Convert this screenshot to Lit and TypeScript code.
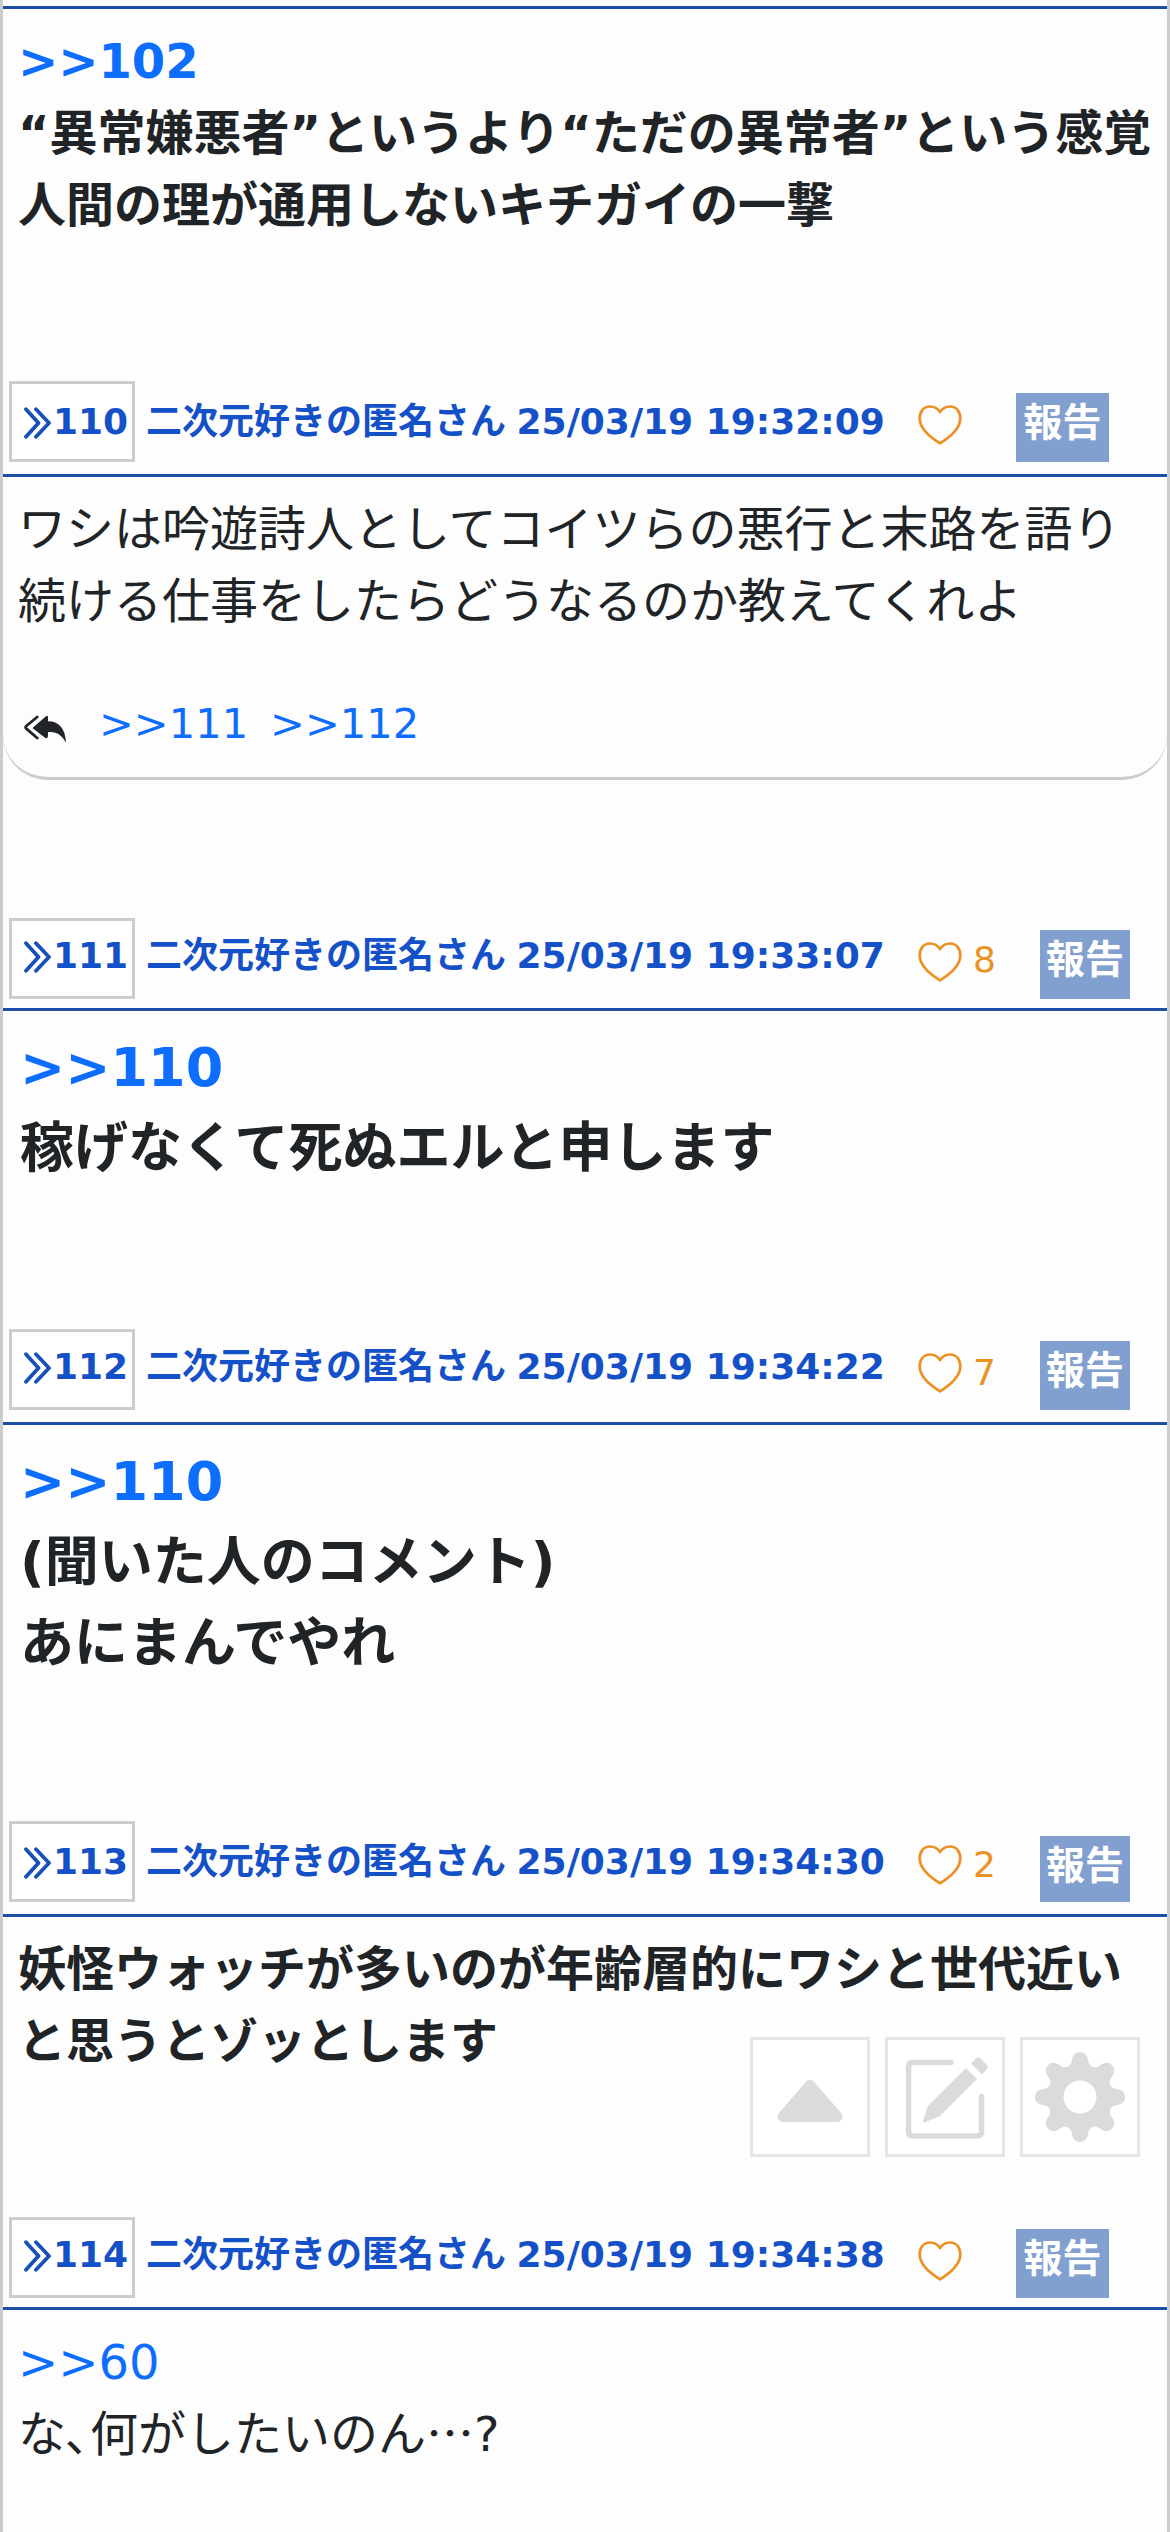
import { LitElement, html, css, svg, nothing } from "lit";
import { customElement, property } from "lit/decorators.js";

interface Post {
  no: number;
  time: string;
  likes?: number;
  size: "normal" | "strong" | "large";
  quote?: string;
  lines: unknown[];
  replies?: string[];
  head: "tight" | "loose" | "low";
  bodyHeight: number;
  countRaised?: boolean;
}

const POSTS: Post[] = [
  { no: 110, time: "25/03/19 19:32:09", size: "normal", lines: ["ワシは吟遊詩人としてコイツらの悪行と末路を語り", "続ける仕事をしたらどうなるのか教えてくれよ"], replies: [">>111", ">>112"], head: "loose", bodyHeight: 303 },
  { no: 111, time: "25/03/19 19:33:07", likes: 8, size: "large", quote: ">>110", lines: ["稼げなくて死ぬエルと申します"], head: "tight", bodyHeight: 210, countRaised: true },
  { no: 112, time: "25/03/19 19:34:22", likes: 7, size: "large", quote: ">>110", lines: ["(聞いた人のコメント)", "あにまんでやれ"], head: "loose", bodyHeight: 288 },
  { no: 113, time: "25/03/19 19:34:30", likes: 2, size: "strong", lines: ["妖怪ウォッチが多いのが年齢層的にワシと世代近い", "と思うとゾッとします"], head: "low", bodyHeight: 192 },
  { no: 114, time: "25/03/19 19:34:38", size: "normal", quote: ">>60", lines: [html`な､何がしたいのん<span class="cjk">…</span>?`], head: "tight", bodyHeight: 222 },
];

const RAISED = new Set([111, 112, 114]);

const fonts = css`"DejaVu Sans", "Noto Sans CJK JP", sans-serif`;

const chevrons = svg`<svg class="chev" viewBox="0 0 28 32" width="28" height="32">
  <path d="M2 2.200 L14.500 16 L2 29.800 M12 2.200 L25 16 L12 29.800" fill="none" stroke="#1850ba" stroke-width="3.800" stroke-linecap="round" stroke-linejoin="round"/></svg>`;

const heart = svg`<svg class="heart" viewBox="0 0 44 40" width="44" height="40">
  <path d="M22 7 C24.500 3.200 28 1.500 32 1.500 C38.500 1.500 42.300 6.500 42.300 13.500 C42.300 23 33 31.500 22 38.300 C11 31.500 1.700 23 1.700 13.500 C1.700 6.500 5.500 1.500 12 1.500 C16 1.500 19.500 3.200 22 7 Z" fill="none" stroke="#ec9124" stroke-width="2.700" stroke-linejoin="round"/></svg>`;

const replyAll = svg`<svg class="reply-icon" viewBox="0 0 43 27" width="43" height="27">
  <path d="M9.300 12.200 L22 1.300 Q24 0 24 2.500 V6.300 C35 6.300 41.500 14 42 28 C37.500 19 32 16.800 24 17 V20 Q24 24.500 21 22.800 L9.300 13.800 Q8.200 13 9.300 12.200 Z" fill="#212529"/>
  <path d="M13.200 2 L2.300 11 Q1 12.300 2.300 13.600 L13.200 23" fill="none" stroke="#212529" stroke-width="2.800" stroke-linecap="round"/></svg>`;

const upIcon = svg`<svg viewBox="0 0 120 120" width="120" height="120">
  <path d="M60 48.500 L33 79.500 H87 Z" fill="#dbdbdb" stroke="#dbdbdb" stroke-width="11" stroke-linejoin="round"/></svg>`;

const editIcon = svg`<svg viewBox="0 0 120 120" width="120" height="120">
  <path d="M66 25.500 H28 Q23.500 25.500 23.500 30 V94.500 Q23.500 99 28 99 H92 Q96.500 99 96.500 94.500 V59.500" fill="none" stroke="#dbdbdb" stroke-width="5.500" stroke-linecap="round"/>
  <path d="M81 31 L92 42 L55 79 L39.500 85.500 Q37.500 86 38 84 L42.500 69.500 Z M86 26.500 L90.800 21.500 Q93 19 95.300 21.300 L101.500 27.500 Q104 30 101.500 32.500 L97 37.500 Z" fill="#dbdbdb"/></svg>`;

/* Eight-lobed wheel traced around a polar ring. */
const gearPath = (() => {
  const pts: string[] = [];
  for (let i = 0; i < 8; i++) {
    const rot = (x: number, y: number) => {
      const a = (i * Math.PI) / 4;
      return `${(60 + x * Math.cos(a) - y * Math.sin(a)).toFixed(2)} ${(60 + x * Math.sin(a) + y * Math.cos(a)).toFixed(2)}`;
    };
    pts.push(
      `${i ? "L" : "M"}${rot(-8.3, -36)}`,
      `C${rot(-7.5, -42)} ${rot(-4.5, -45)} ${rot(0, -45)}`,
      `C${rot(4.5, -45)} ${rot(7.5, -42)} ${rot(8.3, -36)}`,
      `C${rot(9.5, -30)} ${rot(15, -28)} ${rot(19.59, -31.33)}`
    );
  }
  return pts.join(" ") + " Z";
})();

const gearIcon = svg`<svg viewBox="0 0 120 120" width="120" height="120">
  <path fill-rule="evenodd" d="${gearPath} M76.500 60 A16.500 16.500 0 1 0 43.500 60 A16.500 16.500 0 1 0 76.500 60 Z" fill="#dbdbdb"/></svg>`;

@customElement("post-head")
export class PostHead extends LitElement {
  @property({ attribute: false }) post!: Post;

  static styles = css`
    :host { display: block; font-family: ${fonts}; color: #1450c8; }
    .head { display: flex; align-items: flex-start; height: 81px; padding-left: 6px; padding-bottom: 12px; border-bottom: 3px solid #1c4fa5; }
    .head.tight { padding-bottom: 9px; }
    .no { box-sizing: border-box; width: 126px; height: 81px; flex: none; display: flex; border: 3px solid #ccc; background: #fff; padding: 0 0 0 12px; font-weight: 700; font-size: 36px; line-height: 75px; white-space: nowrap; }
    .chev { flex: none; margin: 23px 1px 0 0; }
    .meta { flex: none; width: 749px; margin-left: 11px; font-weight: 700; font-size: 36px; line-height: 81px; white-space: nowrap; }
    .date { margin-left: -2px; }
    .raised .no { line-height: 69px; }
    .raised .chev { margin-top: 20px; }
    .raised .meta { line-height: 75px; }
    .like { flex: none; display: flex; color: #ec9124; font-size: 36px; line-height: 87px; margin-left: 23px; width: 98px; }
    .like.counted { width: 122px; }
    .like.lifted { line-height: 83px; }
    .heart { margin: 24px 11px 0 0; flex: none; }
    .report { flex: none; width: 93px; height: 69px; margin-top: 12px; background: #819fcf; color: #fff; font-weight: 700; font-size: 39px; line-height: 60px; text-align: center; white-space: nowrap; }
    .report.counted { width: 90px; }
    .low .report { height: 66px; margin-top: 15px; }
  `;

  render() {
    const p = this.post;
    const counted = p.likes !== undefined ? "counted" : "";
    return html`<header class="head ${p.head} ${RAISED.has(p.no) ? "raised" : ""}">
      <div class="no">${chevrons}<span>${p.no}</span></div>
      <div class="meta">二次元好きの匿名さん <span class="date">${p.time}</span></div>
      <div class="like ${counted} ${p.countRaised ? "lifted" : ""}">${heart}<span>${p.likes ?? nothing}</span></div>
      <div class="report ${counted}">報告</div>
    </header>`;
  }
}

@customElement("app-root")
export class AppRoot extends LitElement {
  static styles = css`
    :host { display: block; font-family: ${fonts}; color: #212427; }
    .page { position: relative; box-sizing: border-box; width: 1170px; height: 2532px; overflow: hidden; border-left: 3px solid #ccc; border-right: 3px solid #ccc; background: #fdfdfd; }
    .first { height: 372px; margin-top: 6px; border-top: 3px solid #1c4fa5; }
    .body { box-sizing: border-box; padding: 16px 0 0 15px; font-size: 48px; line-height: 72px; white-space: nowrap; }
    .strong { font-weight: 700; }
    .large { padding-left: 17px; font-weight: 700; font-size: 54px; line-height: 81px; }
    .cjk { font-family: "Noto Sans CJK JP", sans-serif; line-height: 1; }
    .quote { color: #0d6efd; }
    .replies { display: flex; align-items: center; gap: 22px; margin-top: 51px; font-size: 41.6px; line-height: 72px; color: #0d6efd; }
    .reply-icon { margin: 9px 10px 0 6px; }
    .rounded { border-bottom: 3px solid #ccc; border-radius: 0 0 45px 45px; }
    .after { height: 108px; }
    .after.wide { height: 138px; }
    .tools { position: absolute; top: 2037px; left: 747px; display: flex; gap: 15px; }
    .tool { box-sizing: border-box; width: 120px; height: 120px; border: 3px solid #e5e5e5; background: #fff; display: flex; align-items: center; justify-content: center; }
    .tool svg { flex: none; }
  `;

  render() {
    return html`<main class="page">
      <section class="first"><div class="body strong">
        <div class="quote">&gt;&gt;102</div>
        <div>“異常嫌悪者”というより“ただの異常者”という感覚</div>
        <div>人間の理が通用しないキチガイの一撃</div>
      </div></section>
      ${POSTS.map((p) => html`
        <post-head .post=${p}></post-head>
        <div class="body ${p.size} ${p.replies ? "rounded" : ""}" style="height:${p.bodyHeight}px">
          ${p.quote ? html`<div class="quote">${p.quote}</div>` : nothing}
          ${p.lines.map((l) => html`<div>${l}</div>`)}
          ${p.replies ? html`<div class="replies">${replyAll}${p.replies.map((r) => html`<span>${r}</span>`)}</div>` : nothing}
        </div>
        ${p.no < 114 ? html`<div class="after ${p.replies ? "wide" : ""}"></div>` : nothing}
      `)}
      <nav class="tools">
        <div class="tool">${upIcon}</div>
        <div class="tool">${editIcon}</div>
        <div class="tool">${gearIcon}</div>
      </nav>
    </main>`;
  }
}
